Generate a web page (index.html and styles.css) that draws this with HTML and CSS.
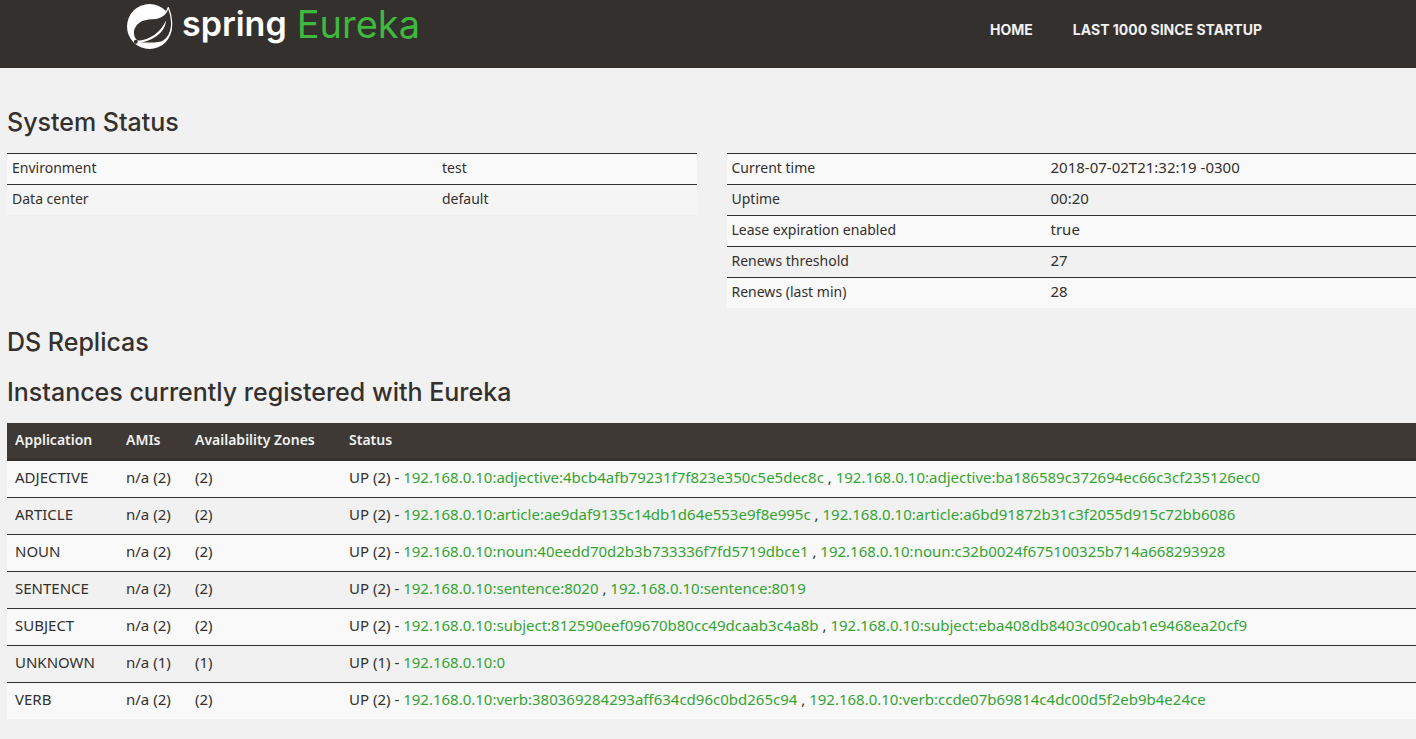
FILE: index.html
```html
<!DOCTYPE html>
<html lang="en">
<head>
<meta charset="utf-8">
<title>Eureka</title>
<link rel="stylesheet" href="styles.css">
</head>
<body>
<header class="navbar">
  <a class="brand" href="#" aria-label="Spring Eureka">
    <svg class="brand-leaf" viewBox="0 0 46 46" aria-hidden="true">
      <circle cx="22.5" cy="22.5" r="22.5" fill="#fff"/>
      <path d="M41.300 3.500C39.500 9 36 12.500 31 13.800C26 15 20.500 14 15 16.500C7.500 20 4 28 8 34.500C9 36 10 37 11.500 38.500C20 39.300 31 40 36.500 37C45.500 31 47 17 41.300 3.500Z" fill="#34302d" stroke="#fff" stroke-width="1.200" stroke-linejoin="round"/>
      <path d="M39 16.500C38.500 27.500 27 37 12 38.800L9.500 36.800C24 36 33.500 28 39 16.500Z" fill="#fff"/>
      <circle cx="8.800" cy="37.800" r="2" fill="#34302d"/>
    </svg>
    <span class="brand-spring">spring</span>
    <span class="brand-eureka">Eureka</span>
  </a>
  <nav class="menu">
    <a href="#">HOME</a>
    <a href="#">LAST 1000 SINCE STARTUP</a>
  </nav>
</header>
<main class="content">
  <h1>System Status</h1>
  <div class="status">
    <table class="facts facts-env">
      <tr><th scope="row">Environment</th><td>test</td></tr>
      <tr><th scope="row">Data center</th><td>default</td></tr>
    </table>
    <table class="facts facts-lease">
      <tr><th scope="row">Current time</th><td>2018-07-02T21:32:19 -0300</td></tr>
      <tr><th scope="row">Uptime</th><td>00:20</td></tr>
      <tr><th scope="row">Lease expiration enabled</th><td>true</td></tr>
      <tr><th scope="row">Renews threshold</th><td>27</td></tr>
      <tr><th scope="row">Renews (last min)</th><td>28</td></tr>
    </table>
  </div>
  <h1>DS Replicas</h1>
  <h1>Instances currently registered with Eureka</h1>
  <table class="instances">
    <thead>
      <tr><th class="col-app">Application</th><th class="col-ami">AMIs</th><th class="col-zone">Availability Zones</th><th>Status</th></tr>
    </thead>
    <tbody>
      <tr><td>ADJECTIVE</td><td>n/a (2)</td><td>(2)</td><td>UP (2) - <a href="#">192.168.0.10:adjective:4bcb4afb79231f7f823e350c5e5dec8c</a> , <a href="#">192.168.0.10:adjective:ba186589c372694ec66c3cf235126ec0</a></td></tr>
      <tr><td>ARTICLE</td><td>n/a (2)</td><td>(2)</td><td>UP (2) - <a href="#">192.168.0.10:article:ae9daf9135c14db1d64e553e9f8e995c</a> , <a href="#">192.168.0.10:article:a6bd91872b31c3f2055d915c72bb6086</a></td></tr>
      <tr><td>NOUN</td><td>n/a (2)</td><td>(2)</td><td>UP (2) - <a href="#">192.168.0.10:noun:40eedd70d2b3b733336f7fd5719dbce1</a> , <a href="#">192.168.0.10:noun:c32b0024f675100325b714a668293928</a></td></tr>
      <tr><td>SENTENCE</td><td>n/a (2)</td><td>(2)</td><td>UP (2) - <a href="#">192.168.0.10:sentence:8020</a> , <a href="#">192.168.0.10:sentence:8019</a></td></tr>
      <tr><td>SUBJECT</td><td>n/a (2)</td><td>(2)</td><td>UP (2) - <a href="#">192.168.0.10:subject:812590eef09670b80cc49dcaab3c4a8b</a> , <a href="#">192.168.0.10:subject:eba408db8403c090cab1e9468ea20cf9</a></td></tr>
      <tr><td>UNKNOWN</td><td>n/a (1)</td><td>(1)</td><td>UP (1) - <a href="#">192.168.0.10:0</a></td></tr>
      <tr><td>VERB</td><td>n/a (2)</td><td>(2)</td><td>UP (2) - <a href="#">192.168.0.10:verb:380369284293aff634cd96c0bd265c94</a> , <a href="#">192.168.0.10:verb:ccde07b69814c4dc00d5f2eb9b4e24ce</a></td></tr>
    </tbody>
  </table>
</main>
</body>
</html>
```
FILE: styles.css
```css
* { box-sizing: border-box; }

body {
  margin: 0;
  background: #f1f1f1;
  color: #34302d;
  font: 14px/20px "Noto Sans", "Open Sans", sans-serif;
}

a { color: #34a432; text-decoration: none; }

.navbar {
  display: flex;
  justify-content: space-between;
  align-items: flex-start;
  height: 68px;
  padding: 0 154px 0 127px;
  background: #34302d;
}

.brand { display: flex; align-items: flex-start; padding-top: 4px; white-space: nowrap; }
.brand-leaf { width: 46px; height: 46px; margin-right: 9px; }
.brand-spring {
  margin-right: 10px;
  color: #fff;
  font: 600 34px/40px Inter, sans-serif;
}
.brand-eureka {
  color: #3fb83f;
  font: 400 38px/40px Inter, sans-serif;
}

.menu { display: flex; gap: 40px; padding-top: 20px; }
.menu a {
  color: #f1f1f1;
  font: 700 14px/20px Inter, sans-serif;
}

.content { padding: 35px 0 20px 7px; }

h1 {
  margin: 0;
  padding: 4px 0 16px;
  font: 500 25px/30px Inter, sans-serif;
}

.status {
  display: grid;
  grid-template-columns: 1fr 1fr;
  gap: 30px;
  align-items: start;
  margin-bottom: 15px;
}

table { width: 100%; border-collapse: separate; border-spacing: 0; table-layout: fixed; }
th { text-align: left; }

.facts th, .facts td {
  padding: 4px 5px 6px;
  border-top: 1px solid #34302d;
  font-weight: 400;
}
.facts tr:nth-child(odd) { background: #f9f9f9; }
.facts-env tr:nth-child(even) { background: #f5f5f5; }
.facts-env th { width: 430px; }
.facts-lease th { width: 319px; }
.facts-lease td { padding: 3px 5px 7px; font-size: 15px; }

.instances th {
  padding: 7px 8px 9px;
  background: #3e3934;
  border-bottom: 2px solid #34302d;
  color: #f1f1f1;
  font-weight: 600;
}
.instances td { padding: 6px 8px 10px; font-size: 15px; }
.instances tr + tr td { border-top: 1px solid #34302d; }
.instances tbody tr:nth-child(odd) { background: #f9f9f9; }
.col-app { width: 111px; }
.col-ami { width: 69px; }
.col-zone { width: 154px; }
```
